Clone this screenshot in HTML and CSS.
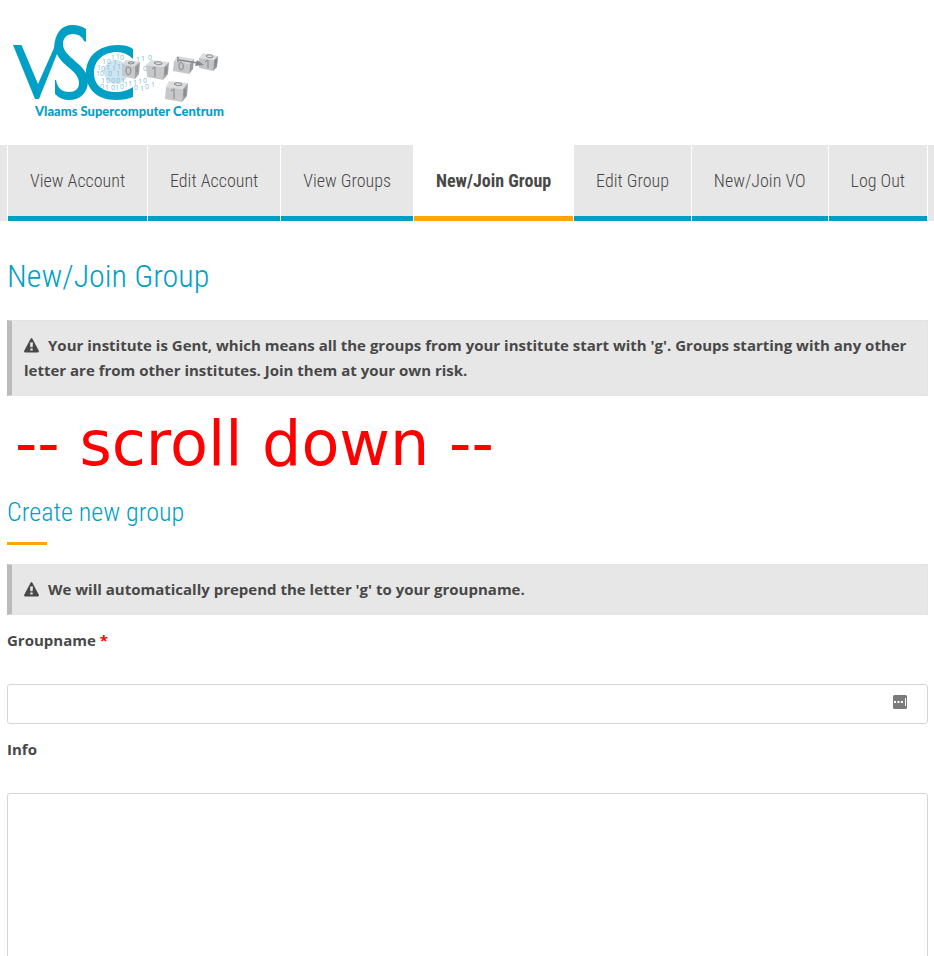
FILE: index.html
```html
<!DOCTYPE html>
<html lang="en">
<head>
<meta charset="utf-8">
<meta name="viewport" content="width=device-width, initial-scale=1">
<title>New/Join Group</title>
<link rel="stylesheet" href="styles.css">
</head>
<body>
<svg class="defs" aria-hidden="true">
  <symbol id="warning" viewBox="0 0 15 15"><path fill-rule="evenodd" d="M6.600.8Q7.500-.6 8.400.8L14.800 12.700Q15.300 14.500 13.600 14.500H1.400Q-.3 14.500.2 12.700ZM6 4.500 6.400 9.300H8.600L9 4.500ZM6.300 10.500V12.600H8.700V10.500Z"/></symbol>
</svg>
<header class="header">
  <svg class="logo" viewBox="0 0 212 96" role="img" aria-label="Vlaams Supercomputer Centrum">
    <circle cx="103" cy="48" r="12" fill="#cfe4f1"/>
    <g class="bits">
      <text x="98 103 107" y="36 35 36">110</text>
      <text x="89 94 100" y="40 40 41">101</text>
      <text x="84 88 93 99 104" y="46 47 46 47 45">10111</text>
      <text x="83 87 95 103" y="52">1001</text>
      <text x="88 93 98 103 108" y="59">10001</text>
      <text x="87 92 98 102 107 111 115 120 125 130" y="65 66 66 66 65 63 62 61 60 59">0101011110</text>
      <text x="123 128 135" y="38 37 36">110</text>
      <text x="130" y="47">0</text>
      <text x="121 127 132 138" y="66 67 65 63">0101</text>
    </g>
    <g fill="#00a0c6">
      <path d="M0 21H8.500L25 60 41 24C42 9 48 1 60 1Q67 1 73 5V18L71 17Q68 10 60 10C54 10 50 14 50 20C50 34 75 40 75 57C75 69 67 76 56 76Q48 76 42 70V56H43Q45 68 56 68C62 68 66 65 66 59C66 47 49 42 44 30L26 75H22Z"/>
      <path d="M120 25Q115 21 105 21C85 21 73 33 73 49C73 65 84 76 103 76Q113 76 120 73V63Q113 68 103 68C89 68 81 61 81 49C81 37 90 28 104 28Q113 28 120 35Z"/>
    </g>
    <g>
      <g transform="translate(109 36)"><path fill="#d8d9da" d="M4 0 18 2 13 6 0 4Z"/><path fill="#c6c8ca" d="M0 4 13 6V19L0 16Z"/><path fill="#a0a2a4" d="M13 6 18 2 17 14 13 19Z"/><path class="digit" d="M6 7Q9 7 9 11Q8 15 6 15Q4 14 4 10Q4 7 6 7ZM15 6Q16 6 15 12M7 2Q12 1 12 3Q8 5 6 3Z"/></g>
      <g transform="translate(133 36)"><path fill="#dddedf" d="M5 0 23 2 18 7 0 5Z"/><path fill="#c6c8c9" d="M0 5 18 7 17 20 1 17Z"/><path fill="#a0a2a4" d="M18 7 23 2 22 14 17 20Z"/><path class="digit" d="M6 9 9 7V17M20 7Q22 6 20 14Q18 16 20 7M9 2Q16 1 16 4Q11 6 8 3Z"/></g>
      <g transform="translate(160 32)"><path fill="#d9dadb" d="M4 0 21 3 17 8 1 5Z"/><path fill="#c5c7c9" d="M1 5 17 8 16 18 0 15Z"/><path fill="#999c9e" d="M17 8 21 3 20 13 16 18Z"/><path class="digit" d="M8 6Q11 7 10 13Q6 16 6 9Q6 6 8 6Z"/></g>
      <g transform="translate(186 29)"><path fill="#dddedf" d="M4 0 19 3 15 7 0 5Z"/><path fill="#c2c4c6" d="M0 5 15 7 14 18 0 15Z"/><path fill="#929597" d="M15 7 19 3 18 14 14 18Z"/><path class="digit" d="M6 9 9 7V15M17 7Q19 5 17 12Q15 14 17 7M8 2Q14 1 14 4Q9 6 7 3Z"/></g>
      <g transform="translate(152 57)"><path fill="#dcddde" d="M4 0 23 2 18 8 1 6Z"/><path fill="#c6c8c9" d="M1 6 18 8 17 21 0 18Z"/><path fill="#a0a2a4" d="M18 8 23 2 22 15 17 21Z"/><path class="digit" d="M6 10 9 8V18M20 8Q22 7 20 15Q18 17 20 8M10 2Q17 1 17 4Q12 6 9 3Z"/></g>
      <path d="M165 33 165 38M166 36 185 39" fill="none" stroke="#85888b" stroke-width="1.500"/>
      <path d="M184 36 191 41 182 42Z" fill="#85888b"/>
    </g>
    <text class="logo-name" x="22" y="92">Vlaams Supercomputer Centrum</text>
  </svg>
</header>
<nav class="nav">
  <ul class="tabs">
    <li><a href="#">View Account</a></li>
    <li><a href="#">Edit Account</a></li>
    <li><a href="#">View Groups</a></li>
    <li><a class="active" href="#" aria-current="page">New/Join Group</a></li>
    <li><a href="#">Edit Group</a></li>
    <li><a href="#">New/Join VO</a></li>
    <li><a href="#">Log Out</a></li>
  </ul>
</nav>
<main class="content">
  <h1>New/Join Group</h1>
  <p class="notice"><svg class="warning" aria-hidden="true"><use href="#warning"/></svg>Your institute is Gent, which means all the groups from your institute start with 'g'. Groups starting with any other letter are from other institutes. Join them at your own risk.</p>
  <p class="scroll-note">-- scroll down --</p>
  <h2>Create new group</h2>
  <p class="notice"><svg class="warning" aria-hidden="true"><use href="#warning"/></svg>We will automatically prepend the letter 'g' to your groupname.</p>
  <form>
    <label for="groupname">Groupname <span class="required">*</span></label>
    <div class="field">
      <input id="groupname" type="text" required>
      <svg class="autofill" viewBox="0 0 14 14" aria-hidden="true"><rect width="14" height="14" rx="1.500" fill="#7b7b7b"/><path fill="#fff" d="M1 6h2v2H1zM4.500 6h2v2h-2zM8 6h2v2H8zM12 3h1v8h-1z"/></svg>
    </div>
    <label for="info">Info</label>
    <textarea id="info"></textarea>
  </form>
</main>
</body>
</html>
```
FILE: styles.css
```css
* { box-sizing: border-box; }
body {
  margin: 0;
  color: #484848;
  background: #fff;
  font: 15px/25px "Open Sans", sans-serif;
}
.defs { display: none; }
.header { padding: 24px 13px 25px; }
.logo { display: block; width: 212px; height: 96px; overflow: visible; }
.bits { fill: #7dbdd8; font: 7px "Open Sans", sans-serif; }
.digit { fill: none; stroke: #85888b; stroke-width: 1; }
.logo-name { fill: #00a0c6; font: 900 13px Lato, sans-serif; }
.nav { padding: 0 6px 0 7px; background: #e7e7e7; }
.tabs {
  display: flex;
  margin: 0;
  padding: 0;
  list-style: none;
  border-left: 1px solid #fff;
}
.tabs li { flex: 1 1 auto; border-right: 1px solid #fff; }
.tabs a {
  display: block;
  padding: 23px 0 22px;
  border-bottom: 5px solid #00a0c6;
  color: #484848;
  font: 300 18px/26px "Roboto Condensed", Roboto, sans-serif;
  text-align: center;
  text-decoration: none;
  white-space: nowrap;
}
.tabs .active { background: #fff; border-color: #ffa500; font-weight: 700; }
.content { padding: 33px 6px 0 7px; }
h1, h2 {
  margin: 0;
  color: #00a0c6;
  font-family: "Roboto Condensed", Roboto, sans-serif;
  font-weight: 300;
}
h1 { margin-bottom: 22px; font-size: 32px; line-height: 44px; }
h2 { font-size: 26px; line-height: 36px; }
h2::after {
  content: "";
  display: block;
  width: 40px;
  height: 3px;
  margin: 12px 0 19px;
  background: #ffa500;
}
.notice {
  margin: 0;
  padding: 12px;
  border: 1px solid #e4e4e4;
  border-left: 5px solid #bbb;
  background: #e7e7e7;
  font-weight: 700;
}
.warning {
  width: 15px;
  height: 15px;
  margin-right: 9px;
  vertical-align: -2px;
  fill: #484848;
}
.scroll-note {
  margin: 10px 8px 12px;
  color: #f00;
  font: 62px/76px "DejaVu Sans", sans-serif;
}
form { padding-top: 13px; }
label { display: block; margin-bottom: 31px; font-weight: 700; }
.required { color: #f00; }
.field { position: relative; margin-bottom: 13px; }
input, textarea {
  display: block;
  width: 100%;
  border: 1px solid #d5d5d5;
  border-radius: 3px;
  background: #fff;
  color: inherit;
  font: inherit;
}
input { height: 40px; padding: 6px 40px 6px 12px; }
textarea { height: 240px; padding: 12px; resize: none; }
.autofill { position: absolute; top: 11px; right: 21px; width: 14px; height: 14px; }
```
